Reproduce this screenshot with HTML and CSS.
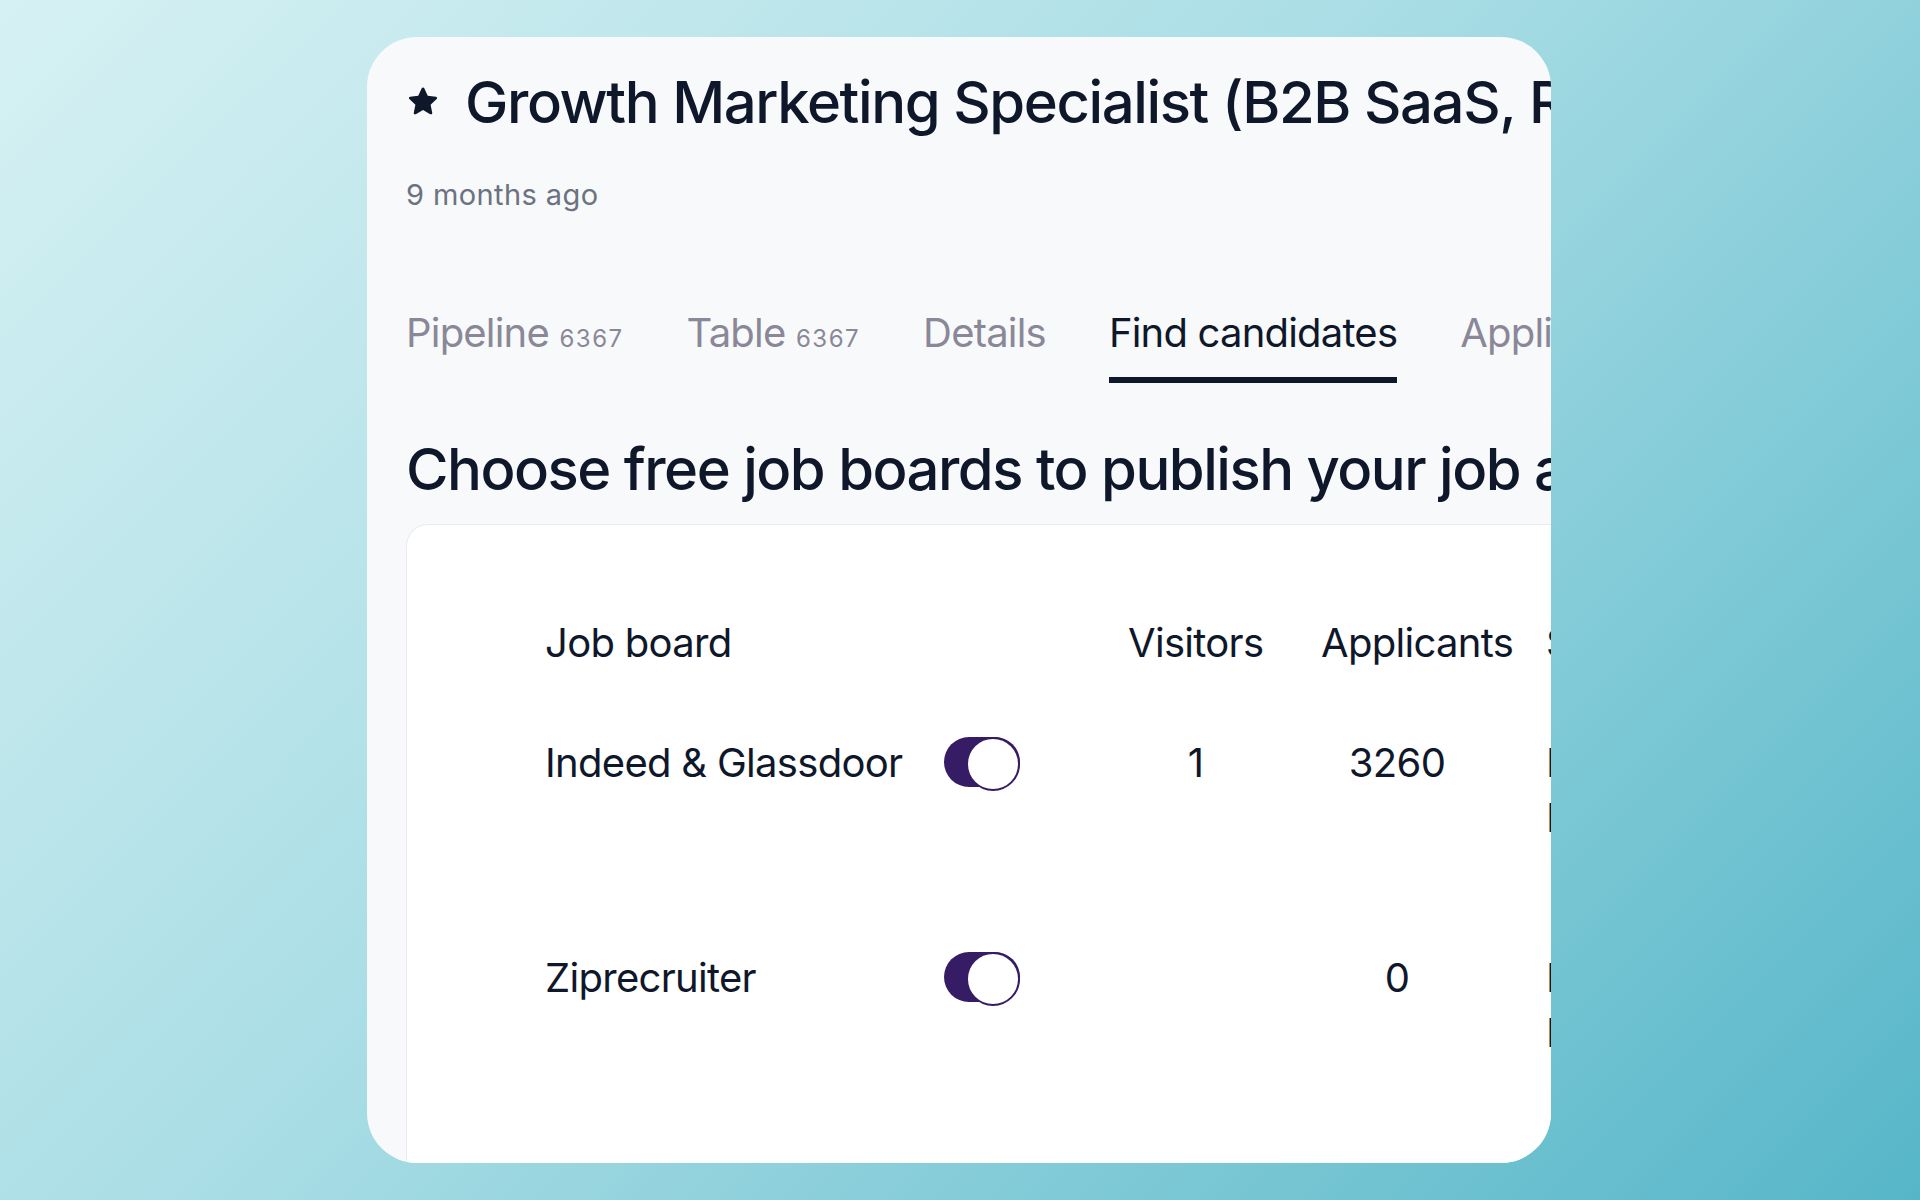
FILE: index.html
```html
<!DOCTYPE html>
<html lang="en">
<head>
    <meta charset="UTF-8">
    <meta name="viewport" content="width=device-width, initial-scale=1.0">
    <title>Growth Marketing Specialist</title>
    <link rel="stylesheet" href="styles.css">
</head>
<body>
    <main class="card">
        <header class="job-head">
            <h1 class="job-title">
                <svg class="star" viewBox="2 2.3 20 19" aria-hidden="true">
                    <path d="M12 2.6c.35 0 .66.2.8.52l2.2 4.75 5.15.6c.74.09 1.04 1 .49 1.5l-3.83 3.52 1.030 5.08c.15.73-.63 1.29-1.28.92L12 16.93l-4.56 2.56c-.65.37-1.43-.19-1.28-.92l1.03-5.08-3.83-3.520c-.55-.5-.25-1.41.49-1.5l5.15-.6 2.2-4.75c.14-.32.45-.52.8-.52z"/>
                </svg>
                <span>Growth Marketing Specialist (B2B SaaS, Remote)</span>
            </h1>
            <p class="job-age">9 months ago</p>
        </header>

        <nav class="tabs">
            <a class="tab" href="#">Pipeline <span class="count">6367</span></a>
            <a class="tab" href="#">Table <span class="count">6367</span></a>
            <a class="tab" href="#">Details</a>
            <a class="tab active" href="#">Find candidates</a>
            <a class="tab" href="#">Applications</a>
        </nav>

        <h2 class="section-title">Choose free job boards to publish your job ad</h2>

        <section class="boards">
            <div class="row head">
                <span class="name">Job board</span>
                <span class="switch-cell"></span>
                <span class="num">Visitors</span>
                <span class="num wide">Applicants</span>
                <span class="status">Status</span>
            </div>

            <div class="row">
                <span class="name">Indeed &amp; Glassdoor</span>
                <span class="switch-cell"><span class="switch on"></span></span>
                <span class="num"><span class="val">1</span></span>
                <span class="num wide"><span class="val">3260</span></span>
                <span class="status">
                    <span>Published</span>
                    <span>Boost</span>
                </span>
            </div>

            <div class="row">
                <span class="name">Ziprecruiter</span>
                <span class="switch-cell"><span class="switch on"></span></span>
                <span class="num"><span class="val"></span></span>
                <span class="num wide"><span class="val">0</span></span>
                <span class="status">
                    <span>Published</span>
                    <span>Boost</span>
                </span>
            </div>
        </section>
    </main>
</body>
</html>
```

FILE: styles.css
```css
*{
    box-sizing: border-box;
}

body{
    margin: 0;
    height: 1200px;
    padding: 37px 0 0 367px;
    background: linear-gradient(135deg, #d6f1f3 0%, #a9dde5 45%, #56b6c8 100%);
    font-family: Inter, "Noto Sans", sans-serif;
    color: #0f172a;
    overflow: hidden;
}

.card{
    width: 1184px;
    height: 1126px;
    background-color: #f8f9fb;
    border-radius: 50px;
    padding: 27px 0 0 39px;
    display: flex;
    flex-direction: column;
    overflow: hidden;
    white-space: nowrap;
}

.job-title{
    margin: 0;
    display: flex;
    align-items: center;
    font-size: 58px;
    line-height: 76px;
    font-weight: 500;
    letter-spacing: -1.4px;
}

.star{
    width: 32px;
    height: 30px;
    margin: 0 26px 0 1px;
    fill: #0f172a;
    flex-shrink: 0;
}

.job-age{
    margin: 37px 0 0;
    font-size: 29px;
    line-height: 36px;
    letter-spacing: 0.4px;
    color: #6b7280;
}

.tabs{
    display: flex;
    gap: 63px;
    margin-top: 96px;
}

.tab{
    font-size: 40px;
    line-height: 48px;
    letter-spacing: -0.8px;
    color: #8a8898;
    text-decoration: none;
    padding-bottom: 14px;
    border-bottom: 6px solid transparent;
}

.tab .count{
    font-size: 24px;
    letter-spacing: 1.5px;
}

.tab.active{
    color: #0f172a;
    border-bottom-color: #0f172a;
}

.section-title{
    margin: 48px 0 17px;
    font-size: 58px;
    line-height: 76px;
    font-weight: 500;
    letter-spacing: -1.5px;
}

.boards{
    flex: 1;
    background: #fff;
    border: 1px solid #e9ebef;
    border-right: none;
    border-bottom: none;
    border-radius: 22px 0 0 0;
    padding: 90px 0 0 138px;
}

.row{
    display: flex;
    align-items: flex-start;
    font-size: 40px;
    line-height: 55px;
    letter-spacing: -0.7px;
    padding-bottom: 65px;
}

.row + .row{
    padding-bottom: 105px;
}

.row > span{
    flex-shrink: 0;
}

.name{
    width: 399px;
}

.switch-cell{
    width: 184px;
    padding-top: 2px;
}

.switch{
    display: block;
    width: 76px;
    height: 50px;
    border-radius: 25px;
    background: #351c64;
    position: relative;
}

.switch.on::after{
    content: "";
    position: absolute;
    top: 0;
    right: 0;
    width: 50px;
    height: 50px;
    border-radius: 50%;
    background: #fff;
    border: 2px solid #351c64;
}

.num{
    width: 193px;
}

.num.wide{
    width: 225px;
}

.val{
    display: block;
    width: 135px;
    text-align: center;
}

.wide .val{
    width: 152px;
}

.status{
    display: flex;
    flex-direction: column;
}
```
